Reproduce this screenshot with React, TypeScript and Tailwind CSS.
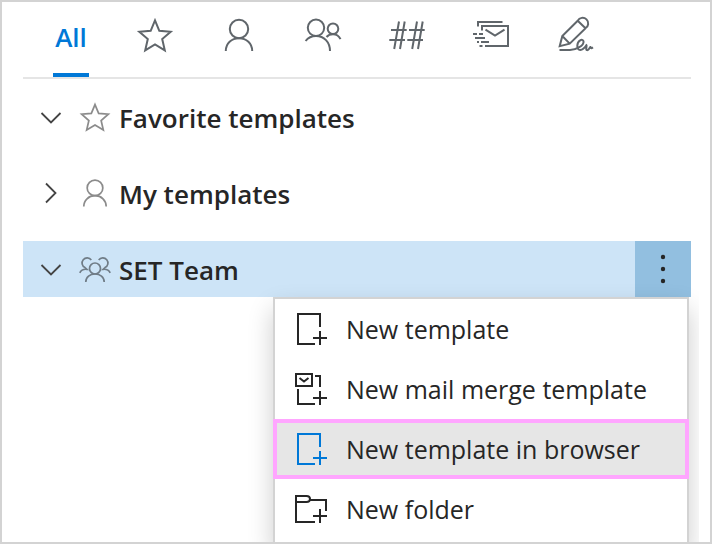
import type { ReactNode } from "react";

type IconProps = { className?: string };

function TabIcon({ children, className = "w-10 h-10" }: { children: ReactNode; className?: string }) {
  return (
    <svg
      viewBox="0 0 40 40"
      fill="none"
      stroke="currentColor"
      strokeWidth="2"
      className={className}
      aria-hidden="true"
    >
      {children}
    </svg>
  );
}

function StarIcon({ className }: IconProps) {
  return (
    <TabIcon className={className}>
      <path d="M20 5.4 24.3 15.8 35.7 16.7 27.2 24.1 29.8 35.3 20 29.4 10.2 35.3 12.8 24.1 4.3 16.7 15.7 15.8Z" />
    </TabIcon>
  );
}

function PersonIcon({ className }: IconProps) {
  return (
    <TabIcon className={className}>
      <circle cx="20" cy="14" r="9.2" />
      <path d="M6.8 36C6.8 28.5 12.5 23.2 20 23.2S33.2 28.5 33.2 36" />
    </TabIcon>
  );
}

function PeopleIcon() {
  return (
    <TabIcon>
      <circle cx="13" cy="12.8" r="8.2" />
      <path d="M2.6 26C5 22.8 8.6 21 13 21c8 0 14 6 14 15" />
      <circle cx="30" cy="13.8" r="5.3" />
      <path d="M23.5 22c1.5-1.8 3.8-2.8 6.5-2.8 3.5 0 6 1.6 7.5 5" />
    </TabIcon>
  );
}

function HashIcon() {
  return (
    <TabIcon>
      <path d="M12 6.5 7.2 34M17.7 6.5 13 34M4 15h15.7M2.3 25H18" />
      <path d="M30 6.5 25.2 34M35.7 6.5 31 34M22 15h15.7M20.3 25H36" />
    </TabIcon>
  );
}

function MailMergeIcon() {
  return (
    <TabIcon>
      <path d="M7 11.5V7h24.5M11 15.5V11h26v20H14M8.5 31h3" />
      <path d="M14.5 14.7 24 20.5l9.5-5.8" />
      <path d="M2 19h4M8 19h4M4 23h10M6 27h2M10 27h8" />
    </TabIcon>
  );
}

function SignatureIcon() {
  return (
    <TabIcon>
      <path d="M22.7 5.7 7.3 21 4.7 31.2 14.7 28.6 30.5 13.2A5.6 5.6 0 1 0 22.7 5.7ZM22.7 5.7l7.8 7.5M7.3 21l7.4 7.6" />
      <path d="M4.5 35H15c6 0 14.3-4.5 13.5-8.8-.8-3-6-.9-6.2 4.6-.1 5.7 5 5.7 9.2-.8.7.4-1.5 5.2.8 5.2 1.8 0 2.2-2.8 3.2-3.2.8.2-.2 2.2 2.5.4" />
    </TabIcon>
  );
}

function TeamIcon() {
  return (
    <svg viewBox="0 0 34 34" fill="none" stroke="currentColor" strokeWidth="1.7" className="w-[34px] h-[34px]" aria-hidden="true">
      <circle cx="17" cy="16.5" r="5.5" />
      <path d="M7.8 30C7.8 25 12 22 17 22s9.2 3 9.2 8" />
      <path d="M13.3 8A5.1 5.1 0 1 0 7 15.6L8.8 17.3C5.5 17 3 18.2 1.8 20.9" />
      <path d="M20.7 8A5.1 5.1 0 1 1 27 15.6L25.2 17.3C28.5 17 31 18.2 32.2 20.9" />
    </svg>
  );
}

function Chevron({ open }: { open: boolean }) {
  return (
    <svg viewBox="0 0 24 24" fill="none" stroke="currentColor" strokeWidth="1.8" className="w-6 h-6" aria-hidden="true">
      <path d={open ? "M2.5 8 12 17.5 21.5 8" : "M7 2.5 16.5 12 7 21.5"} />
    </svg>
  );
}

function MenuIcon({ children }: { children: ReactNode }) {
  return (
    <svg viewBox="0 0 34 32" fill="none" stroke="currentColor" strokeWidth="2" className="w-[34px] h-8 shrink-0" aria-hidden="true">
      {children}
    </svg>
  );
}

const newTemplateIcon = (
  <MenuIcon>
    <path d="M25 14V1H3v30h17M18 25h14M25 18v14" />
  </MenuIcon>
);

const newMailMergeIcon = (
  <MenuIcon>
    <path d="M1 1h16v12H1ZM4.5 5 9 8.5 13.5 5" />
    <path d="M20 3h5v11M3 16v15h17M18 25h14M25 18v14" />
  </MenuIcon>
);

const newFolderIcon = (
  <MenuIcon>
    <path d="M31 18V7H15.5M1 9h10.5c2 0 3.5-1 3.5-3s-1.5-3-3.5-3H1v26h19M18 23h14M25 16v14" />
  </MenuIcon>
);

const tabs = [
  { label: "Favorites", icon: <StarIcon /> },
  { label: "My templates", icon: <PersonIcon /> },
  { label: "Team templates", icon: <PeopleIcon /> },
  { label: "Datasets", icon: <HashIcon /> },
  { label: "Mail merge", icon: <MailMergeIcon /> },
  { label: "Signatures", icon: <SignatureIcon /> },
];

const menuItems = [
  { label: "New template", icon: newTemplateIcon, active: false },
  { label: "New mail merge template", icon: newMailMergeIcon, active: false },
  { label: "New template in browser", icon: newTemplateIcon, active: true },
  { label: "New folder", icon: newFolderIcon, active: false },
];

type RowProps = { label: string; icon: ReactNode; open: boolean; selected?: boolean; children?: ReactNode };

function FolderRow({ label, icon, open, selected = false, children }: RowProps) {
  return (
    <li className={selected ? "relative flex h-14 items-center bg-[#cde4f7]" : "flex h-14 items-center"}>
      <button type="button" aria-label={`Toggle ${label}`} aria-expanded={open} className="flex w-14 h-14 items-center justify-center text-[#444444]">
        <Chevron open={open} />
      </button>
      <span className="flex w-8 shrink-0 justify-center text-black opacity-45">
        <span className="-mx-px">{icon}</span>
      </span>
      <span className="flex-1 pt-0.5 pl-2 text-[26px] font-semibold whitespace-nowrap">{label}</span>
      {children}
    </li>
  );
}

function ContextMenu() {
  return (
    <ul
      role="menu"
      className="absolute top-full right-[2px] w-[416px] pb-1 bg-white border-2 border-[#d3d3d3] shadow-[0_12px_24px_rgba(0,0,0,0.2)]"
    >
      {menuItems.map((item) => (
        <li
          key={item.label}
          role="none"
          className={item.active ? "-mx-[2px] h-[60px] border-4 border-[#ffa6ff] bg-[#e6e6e6]" : "h-[60px]"}
        >
          <button
            type="button"
            role="menuitem"
            className={
              item.active
                ? "flex w-full h-full items-center gap-[17px] px-[18px] text-left"
                : "flex w-full h-full items-center gap-[17px] px-5 text-left"
            }
          >
            <span className={item.active ? "text-[#0078d7]" : "text-[#262626]"}>{item.icon}</span>
            <span className="pt-0.5 text-[25px] whitespace-nowrap">{item.label}</span>
          </button>
        </li>
      ))}
    </ul>
  );
}

function App() {
  return (
    <div className="h-screen overflow-hidden border-2 border-[#d3d3d3] bg-white font-['Open_Sans','Noto_Sans',sans-serif] text-[#262626]">
      <main className="h-full mr-[11px] pl-[21px] pr-2 overflow-hidden">
        <nav className="flex h-[77px] pl-[6px] border-b-2 border-[#e5e5e5]">
          <button type="button" className="flex flex-col w-21 items-center justify-end text-[26px] font-semibold text-[#0078d7]">
            <span className="flex flex-1 items-center">All</span>
            <span className="w-9 h-1 bg-[#0078d7]"></span>
          </button>
          {tabs.map((tab) => (
            <button key={tab.label} type="button" aria-label={tab.label} className="flex w-21 pt-[13px] justify-center text-[#60666b]">
              {tab.icon}
            </button>
          ))}
        </nav>
        <ul className="flex flex-col gap-5 mt-[10px]">
          <FolderRow label="Favorite templates" open icon={<StarIcon className="w-[34px] h-[34px]" />} />
          <FolderRow label="My templates" open={false} icon={<PersonIcon className="w-[34px] h-[34px]" />} />
          <FolderRow label="SET Team" open selected icon={<TeamIcon />}>
            <button type="button" aria-label="More actions" className="flex w-14 h-14 items-center justify-center bg-[#92bfe0]">
              <svg viewBox="0 0 8 32" fill="currentColor" className="w-2 h-8" aria-hidden="true">
                <circle cx="4" cy="4" r="2.2" />
                <circle cx="4" cy="16" r="2.2" />
                <circle cx="4" cy="28" r="2.2" />
              </svg>
            </button>
            <ContextMenu />
          </FolderRow>
        </ul>
      </main>
    </div>
  );
}

export default App;
